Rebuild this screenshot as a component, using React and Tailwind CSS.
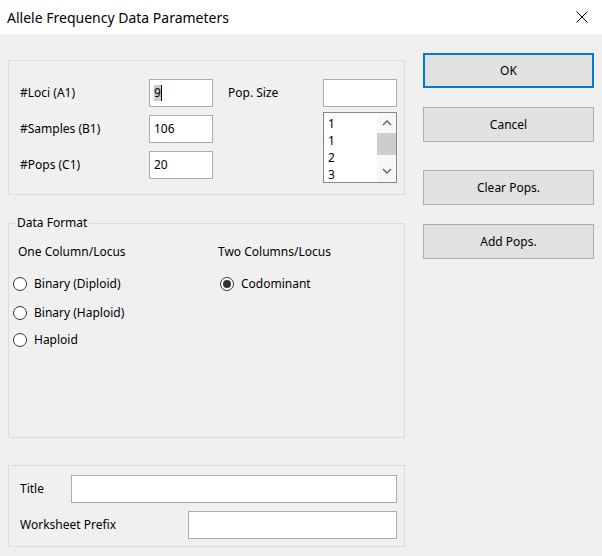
import { useState } from "react";

const font = "font-['Segoe_UI','Noto_Sans',sans-serif]";

function Field({ className = "", children }) {
  return (
    <div
      className={`h-[28px] bg-white border border-[#acacac] flex items-center pl-[4px] text-[12px] text-black ${className}`}
    >
      {children}
    </div>
  );
}

function Radio({ checked, label, className = "" }) {
  return (
    <div className={`flex items-center h-[16px] ${className}`}>
      <span className="w-[14px] h-[14px] rounded-full border border-[#333333] bg-white flex items-center justify-center">
        {checked && <span className="w-[8px] h-[8px] rounded-full bg-[#333333]" />}
      </span>
      <span className="ml-[7px]">{label}</span>
    </div>
  );
}

function Button({ primary, children, className = "" }) {
  return (
    <button
      className={`w-[171px] h-[35px] bg-[#e1e1e1] text-[12px] text-black ${
        primary ? "border-2 border-[#0078d7]" : "border border-[#adadad]"
      } ${className}`}
    >
      {children}
    </button>
  );
}

export default function App() {
  const [format, setFormat] = useState("codominant");

  return (
    <div className={`w-[602px] h-[556px] bg-[#f0f0f0] flex flex-col text-[12px] text-black ${font}`}>
      {/* title bar */}
      <div className="h-[34px] bg-white flex items-center justify-between pl-[7px] pr-[14px]">
        <span className="text-[14px]">Allele Frequency Data Parameters</span>
        <svg width="12" height="12" viewBox="0 0 12 12">
          <path d="M0.5 0.5L11.5 11.5M11.5 0.5L0.5 11.5" stroke="#000" strokeWidth="1" />
        </svg>
      </div>

      <div className="flex pl-[8px]">
        {/* left column */}
        <div className="w-[397px] flex flex-col">
          {/* counts */}
          <div className="mt-[26px] h-[135px] border border-[#dcdcdc] flex pl-[11px] pt-[18px]">
            <div className="flex flex-col gap-[8px]">
              <div className="flex items-center h-[28px]">
                <span className="w-[129px]">#Loci (A1)</span>
                <Field className="w-[64px]">
                  <span className="bg-[#cccccc] leading-[16px]">9</span>
                  <span className="w-px h-[16px] bg-black" />
                </Field>
              </div>
              <div className="flex items-center h-[28px]">
                <span className="w-[129px]">#Samples (B1)</span>
                <Field className="w-[64px]">106</Field>
              </div>
              <div className="flex items-center h-[28px]">
                <span className="w-[129px]">#Pops (C1)</span>
                <Field className="w-[64px]">20</Field>
              </div>
            </div>
            <div className="ml-[15px] w-[95px] h-[28px] flex items-center">Pop. Size</div>
            <div className="w-[74px] flex flex-col">
              <Field className="w-[74px]" />
              <div className="mt-[5px] h-[71px] border border-[#828790] bg-white flex">
                <div className="flex-1 pl-[4px] pt-[2px] leading-[17px]">
                  <div>1</div>
                  <div>1</div>
                  <div>2</div>
                  <div>3</div>
                </div>
                <div className="w-[19px] flex flex-col items-center justify-between bg-[#f7f7f7]">
                  <div className="h-[20px] flex items-center justify-center">
                    <svg width="10" height="6" viewBox="0 0 10 6">
                      <path d="M1 5L5 1L9 5" fill="none" stroke="#606060" strokeWidth="1.4" />
                    </svg>
                  </div>
                  <div className="w-full h-[22px] bg-[#cdcdcd] mb-auto" />
                  <div className="h-[22px] flex items-center justify-center">
                    <svg width="10" height="6" viewBox="0 0 10 6">
                      <path d="M1 1L5 5L9 1" fill="none" stroke="#606060" strokeWidth="1.4" />
                    </svg>
                  </div>
                </div>
              </div>
            </div>
          </div>

          {/* data format */}
          <fieldset className="mt-[20px] h-[223px] border border-[#dcdcdc] px-[6px]">
            <legend className="px-[2px] leading-[16px]">Data Format</legend>
            <div className="flex -mx-[6px]">
              <div className="w-[209px] pl-[4px]">
                <div className="ml-[5px] mt-[13px] leading-[16px]">One Column/Locus</div>
                <div onClick={() => setFormat("bdip")} className="mt-[16px]">
                  <Radio checked={format === "bdip"} label="Binary (Diploid)" />
                </div>
                <div onClick={() => setFormat("bhap")} className="mt-[13px]">
                  <Radio checked={format === "bhap"} label="Binary (Haploid)" />
                </div>
                <div onClick={() => setFormat("hap")} className="mt-[11px]">
                  <Radio checked={format === "hap"} label="Haploid" />
                </div>
              </div>
              <div>
                <div className="mt-[13px] leading-[16px]">Two Columns/Locus</div>
                <div onClick={() => setFormat("codominant")} className="mt-[16px] ml-[2px]">
                  <Radio checked={format === "codominant"} label="Codominant" />
                </div>
              </div>
            </div>
          </fieldset>

          {/* titles */}
          <div className="mt-[27px] h-[82px] border border-[#dcdcdc] pl-[11px] pr-[7px] pt-[9px] flex flex-col gap-[8px]">
            <div className="flex items-center">
              <span className="w-[51px]">Title</span>
              <Field className="flex-1" />
            </div>
            <div className="flex items-center">
              <span className="w-[168px]">Worksheet Prefix</span>
              <Field className="flex-1" />
            </div>
          </div>
        </div>

        {/* buttons */}
        <div className="ml-[18px] mt-[19px] flex flex-col">
          <Button primary>OK</Button>
          <Button className="mt-[19px]">Cancel</Button>
          <Button className="mt-[28px]">Clear Pops.</Button>
          <Button className="mt-[19px]">Add Pops.</Button>
        </div>
      </div>
    </div>
  );
}
